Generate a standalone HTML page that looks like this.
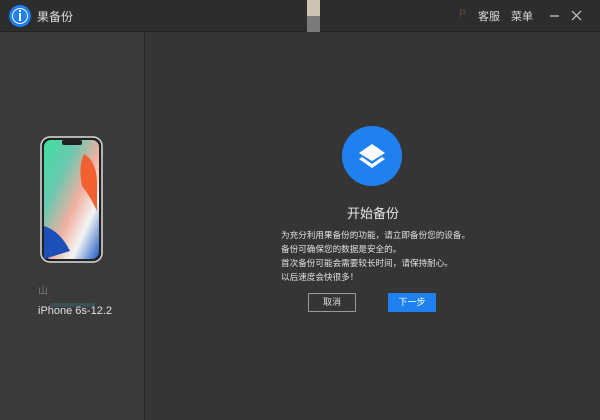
<!DOCTYPE html>
<html><head><meta charset="utf-8"><style>
*{margin:0;padding:0;box-sizing:border-box}
body{width:600px;height:420px;background:#353535;font-family:"Liberation Sans","Noto Sans CJK SC",sans-serif;position:relative;overflow:hidden;color:#ddd}
.title{position:absolute;left:0;top:0;width:600px;height:32px;background:#2d2d2d;border-bottom:1px solid #222}
.side{position:absolute;left:0;top:32px;width:145px;height:388px;background:#3a3a3a;border-right:1px solid #262626}
.abs{position:absolute}
.btn{position:absolute;height:19px;font-size:9px;line-height:17px;text-align:center}
</style></head><body>
<div class="title">
 <div class="abs" style="left:9px;top:5px;width:22px;height:22px;border-radius:50%;background:#1e7ff0"></div>
 <div class="abs" style="left:12px;top:8px;width:16px;height:16px;border-radius:50%;border:1.5px solid #fff"></div>
 <div class="abs" style="left:19px;top:10px;width:2px;height:2px;background:#fff"></div>
 <div class="abs" style="left:19px;top:13px;width:2px;height:8px;background:#fff"></div>
 <div class="abs" style="left:37px;top:8px;font-size:12px;color:#ddd">果备份</div>
 <div class="abs" style="left:307px;top:0;width:13px;height:16px;background:#cdc3b0"></div>
 <div class="abs" style="left:307px;top:16px;width:13px;height:16px;background:#7a7a7a"></div>
 <div class="abs" style="left:459px;top:8px;font-size:11px;color:#5a4a3a">P</div>
 <div class="abs" style="left:478px;top:8px;font-size:11px;color:#ddd">客服</div>
 <div class="abs" style="left:511px;top:8px;font-size:11px;color:#ddd">菜单</div>
 <svg class="abs" style="left:550px;top:10px" width="45" height="12"><line x1="0" y1="6" x2="9" y2="6" stroke="#ccc" stroke-width="1.2"/><line x1="22" y1="1" x2="31" y2="10" stroke="#ccc" stroke-width="1.2"/><line x1="31" y1="1" x2="22" y2="10" stroke="#ccc" stroke-width="1.2"/></svg>
</div>
<div class="side">
 <svg class="abs" style="left:40px;top:104px" width="63" height="127" viewBox="0 0 63 127">
  <defs><linearGradient id="g" x1="0" y1="0" x2="1" y2="1">
   <stop offset="0" stop-color="#3ee0a0"/><stop offset="0.3" stop-color="#6ac8b0"/><stop offset="0.55" stop-color="#f0b0a0"/><stop offset="0.75" stop-color="#f4f4f4"/><stop offset="1" stop-color="#1a58c0"/></linearGradient></defs>
  <rect x="1" y="1" width="61" height="125" rx="9" fill="#222" stroke="#ddd" stroke-width="1.5"/>
  <rect x="4" y="4" width="55" height="119" rx="7" fill="url(#g)"/>
  <path d="M44 18 Q56 25 57 45 L57 75 Q50 60 42 50 Q38 30 44 18Z" fill="#f06030"/>
  <path d="M4 90 Q20 95 30 115 L4 123Z" fill="#1a50b8"/>
  <rect x="22" y="4" width="20" height="5" rx="2" fill="#222"/>
 </svg>
 <div class="abs" style="left:38px;top:250px;font-size:10px;color:#777">山</div>
 <div class="abs" style="left:50px;top:271px;width:45px;height:4px;background:#3c5055"></div>
 <div class="abs" style="left:38px;top:273px;font-size:11px;color:#e0e0e0">iPhone 6s-12.2</div>
</div>
<div class="abs" style="left:342px;top:126px;width:60px;height:60px;border-radius:50%;background:#1f80f0"></div>
<svg class="abs" style="left:356px;top:140px" width="32" height="32" viewBox="0 0 32 32">
 <path d="M16 4 L29 13 L16 21 L3 13Z" fill="#fff"/>
 <path d="M6 17 L16 24 L26 17 L29 19 L16 28 L3 19Z" fill="#fff"/>
</svg>
<div class="abs" style="left:347px;top:203px;font-size:13px;color:#e6e6e6">开始备份</div>
<div class="abs" style="left:281px;top:228px;font-size:8.6px;line-height:14px;color:#e0e0e0">为充分利用果备份的功能，请立即备份您的设备。<br>备份可确保您的数据是安全的。<br>首次备份可能会需要较长时间，请保持耐心。<br>以后速度会快很多！</div>
<div class="btn" style="left:308px;top:293px;width:48px;border:1px solid #999;color:#ddd">取消</div>
<div class="btn" style="left:388px;top:293px;width:48px;background:#1f80f0;color:#fff;line-height:19px">下一步</div>
</body></html>
